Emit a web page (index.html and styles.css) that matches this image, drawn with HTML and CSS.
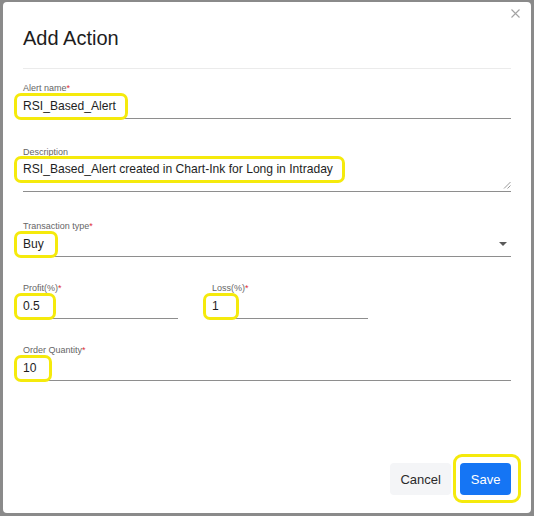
FILE: index.html
```html
<!DOCTYPE html>
<html lang="en">
<head>
<meta charset="utf-8">
<title>Add Action</title>
<link rel="stylesheet" href="styles.css">
</head>
<body>
<div class="modal">
  <button class="close" aria-label="Close">
    <svg width="9" height="9" viewBox="0 0 9 9"><path d="M0.5 0.5L8.5 8.5M8.5 0.5L0.5 8.5" stroke="#a3a3a3" stroke-width="1.1" fill="none"/></svg>
  </button>
  <div class="header">
    <h1 class="title">Add Action</h1>
  </div>
  <div class="body">
    <div class="field f-first">
      <div class="label">Alert name<span class="req">*</span></div>
      <div class="input"><span class="hl hl-name">RSI_Based_Alert</span></div>
    </div>
    <div class="field f-desc">
      <div class="label">Description</div>
      <div class="input textarea">
        <div class="line"><span class="hl hl-desc">RSI_Based_Alert created in Chart-Ink for Long in Intraday</span></div>
        <svg class="resize" width="8" height="8" viewBox="0 0 8 8"><path d="M1 7.5L7.5 1M4.5 7.5L7.5 4.5" stroke="#9a9a9a" stroke-width="1" fill="none"/></svg>
      </div>
    </div>
    <div class="field f-type">
      <div class="label">Transaction type<span class="req">*</span></div>
      <div class="input select"><span class="hl hl-buy">Buy</span>
        <svg class="caret" width="8" height="4" viewBox="0 0 8 4"><path d="M0 0H8L4 4Z" fill="#5a5a5a"/></svg>
      </div>
    </div>
    <div class="row f-row">
      <div class="field">
        <div class="label">Profit(%)<span class="req">*</span></div>
        <div class="input"><span class="hl hl-short">0.5</span></div>
      </div>
      <div class="field">
        <div class="label">Loss(%)<span class="req">*</span></div>
        <div class="input"><span class="hl hl-one">1</span></div>
      </div>
    </div>
    <div class="field f-qty">
      <div class="label">Order Quantity<span class="req">*</span></div>
      <div class="input"><span class="hl hl-short">10</span></div>
    </div>
  </div>
  <div class="footer">
    <button class="btn btn-cancel">Cancel</button>
    <span class="hl-btn"><button class="btn btn-save">Save</button></span>
  </div>
</div>
</body>
</html>
```
FILE: styles.css
```css
* { box-sizing: border-box; }
html, body { height: 100%; }
body {
  margin: 0;
  padding: 2px 3px 3px 3px;
  background: #8a8a8a;
  font-family: "Liberation Sans", Arial, sans-serif;
  color: #222;
}
.modal {
  position: relative;
  height: 100%;
  background: #fff;
  border-radius: 4px;
  display: flex;
  flex-direction: column;
}
.close {
  position: absolute;
  top: 7px;
  right: 11px;
  width: 9px;
  height: 9px;
  padding: 0;
  border: 0;
  background: none;
  display: flex;
}
.header {
  margin: 0 20px;
  padding: 24px 0 18px;
  border-bottom: 1px solid #ebebeb;
}
.title {
  margin: 0;
  font-size: 20px;
  line-height: 24px;
  font-weight: normal;
  color: #1d1d1d;
}
.body {
  padding: 13px 20px 0;
  display: flex;
  flex-direction: column;
}
.label {
  font-size: 9px;
  line-height: 12px;
  color: #666;
}
.req { color: #e0303a; }
.input {
  position: relative;
  height: 25px;
  border-bottom: 1px solid #8e8e8e;
  display: flex;
  align-items: center;
  font-size: 12.1px;
  color: #1e1e1e;
}
.textarea {
  height: 34px;
  display: block;
}
.line {
  height: 22px;
  display: flex;
  align-items: center;
}
.resize {
  position: absolute;
  right: 0;
  bottom: 2px;
}
.select { justify-content: space-between; }
.caret { margin-right: 4px; }
.f-desc { margin-top: 27px; }
.f-type { margin-top: 28px; }
.f-row { margin-top: 25px; }
.f-qty { margin-top: 25px; }
.row {
  display: grid;
  grid-template-columns: 155px 156px;
  column-gap: 34px;
}
.hl {
  display: inline-block;
  line-height: 15px;
  white-space: nowrap;
  border: 3px solid #f5ea0c;
  border-radius: 7px;
  padding: 3px 9px 3px 6px;
  margin-left: -9px;
}
.hl-buy { padding-right: 11px; }
.hl-short { padding-right: 13px; }
.hl-one { padding-right: 17px; }
.footer {
  margin-top: auto;
  display: flex;
  justify-content: flex-end;
  align-items: center;
  gap: 9px;
  padding: 0 20px 18px;
}
.btn {
  height: 32px;
  padding: 0 10.5px;
  border: 0;
  border-radius: 4px;
  font-family: inherit;
  font-size: 13px;
}
.btn-cancel {
  background: #f4f5f7;
  color: #2a2a2a;
}
.btn-save {
  background: #1575f4;
  color: #fff;
}
.hl-btn {
  display: inline-flex;
  border: 3px solid #f5ea0c;
  border-radius: 9px;
  padding: 6px 7px 5px 4px;
  margin: -9px -10px -8px -7px;
}
```
